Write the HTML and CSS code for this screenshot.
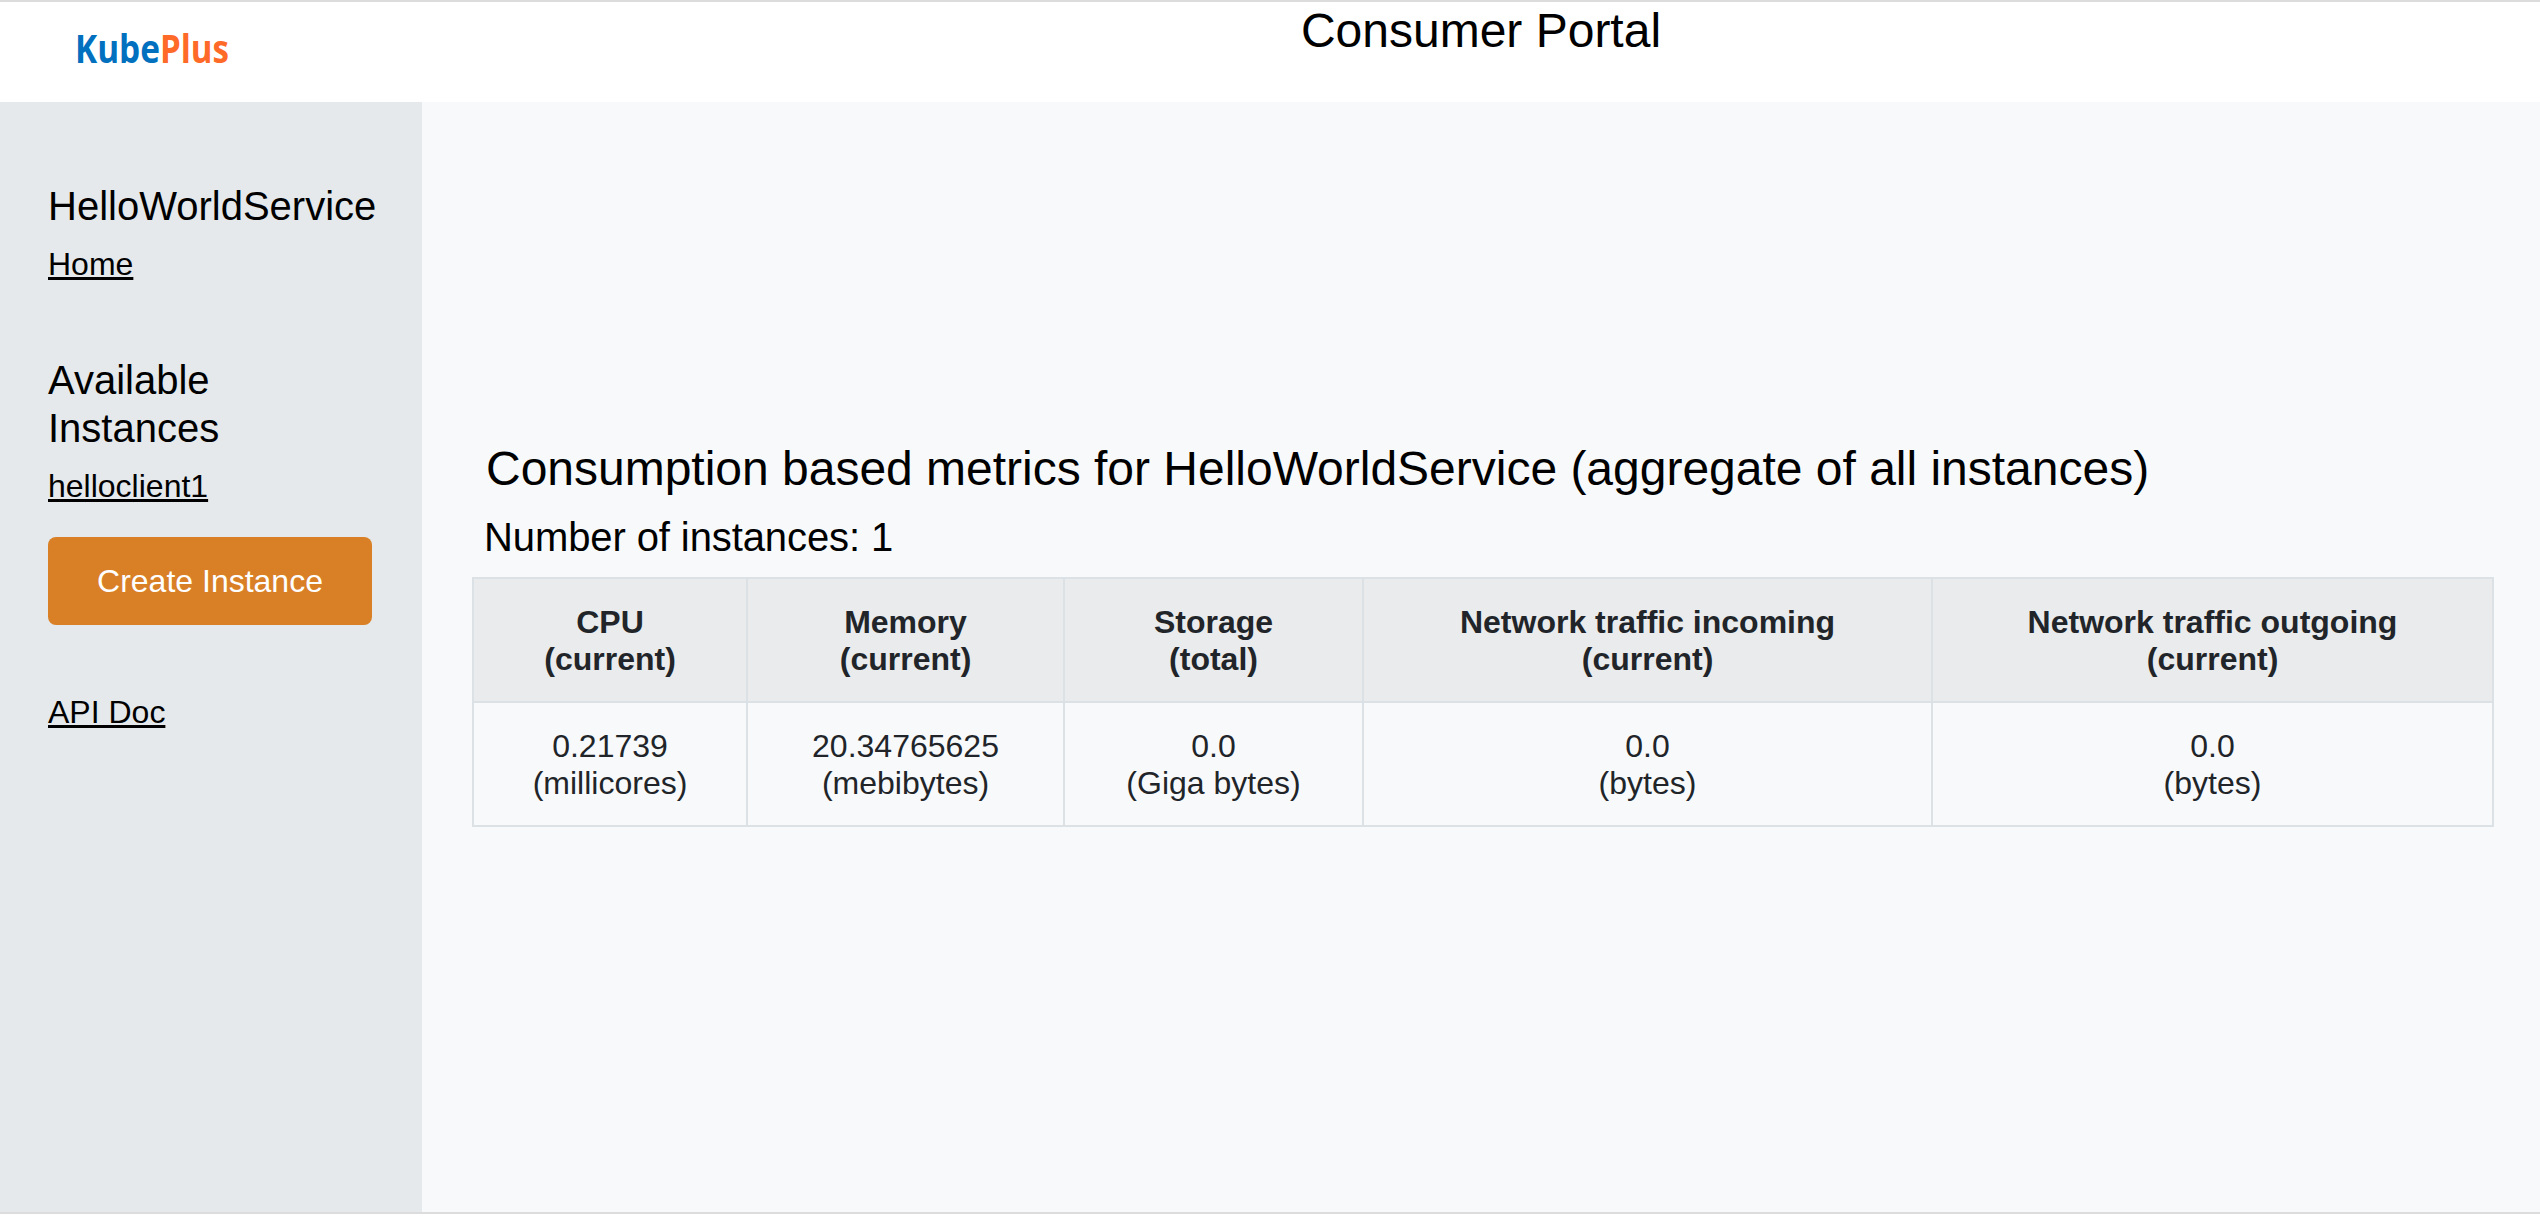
FILE: index.html
```html
<!DOCTYPE html>
<html lang="en">
<head>
  <meta charset="utf-8">
  <title>KubePlus Consumer Portal</title>
  <link rel="stylesheet" href="styles.css">
</head>
<body>
  <header class="topbar">
    <svg class="logo" width="422" height="100" viewBox="0 0 422 100" role="img" aria-label="KubePlus">
      <text class="logo-text logo-kube" x="75" y="60.5" textLength="85" lengthAdjust="spacingAndGlyphs">Kube</text>
      <text class="logo-text logo-plus" x="160" y="60.5" textLength="69" lengthAdjust="spacingAndGlyphs">Plus</text>
    </svg>
    <h1 class="portal-title">Consumer Portal</h1>
  </header>
  <div class="layout">
    <nav class="sidebar">
      <h4 class="side-heading">HelloWorldService</h4>
      <a class="side-link" href="#">Home</a>
      <h4 class="side-heading side-heading-instances">Available<br>Instances</h4>
      <a class="side-link" href="#">helloclient1</a>
      <button class="create-button" type="button">Create Instance</button>
      <a class="side-link side-link-doc" href="#">API Doc</a>
    </nav>
    <main class="content">
      <h2 class="metrics-title">Consumption based metrics for HelloWorldService (aggregate of all instances)</h2>
      <h4 class="metrics-count">Number of instances: 1</h4>
      <table class="metrics">
        <colgroup>
          <col class="col-cpu"><col class="col-memory"><col class="col-storage"><col class="col-incoming"><col class="col-outgoing">
        </colgroup>
        <thead>
          <tr>
            <th>CPU<br>(current)</th>
            <th>Memory<br>(current)</th>
            <th>Storage<br>(total)</th>
            <th>Network traffic incoming<br>(current)</th>
            <th>Network traffic outgoing<br>(current)</th>
          </tr>
        </thead>
        <tbody>
          <tr>
            <td>0.21739<br>(millicores)</td>
            <td>20.34765625<br>(mebibytes)</td>
            <td>0.0<br>(Giga bytes)</td>
            <td>0.0<br>(bytes)</td>
            <td>0.0<br>(bytes)</td>
          </tr>
        </tbody>
      </table>
    </main>
  </div>
</body>
</html>
```
FILE: styles.css
```css
* {
  box-sizing: border-box;
}

body {
  margin: 0;
  height: 1216px;
  display: flex;
  flex-direction: column;
  overflow: hidden;
  border-top: 2px solid #dcdcdc;
  background: #fff;
  color: #000;
  font-family: "Liberation Sans", Arial, Helvetica, sans-serif;
  font-size: 32px;
  line-height: 37px;
}

h1, h2, h4 {
  margin: 0;
  font-weight: 400;
}

.topbar {
  display: flex;
  height: 100px;
  flex: none;
}

.logo {
  flex: none;
}

.logo-text {
  font-family: "Open Sans", sans-serif;
  font-size: 39px;
  font-weight: 700;
}

.logo-kube {
  fill: #0070bf;
}

.logo-plus {
  fill: #ff6a28;
}

.portal-title {
  flex: 1;
  text-align: center;
  font-size: 48px;
  line-height: 57.6px;
}

.layout {
  display: flex;
  flex: none;
  height: 1112px;
  border-bottom: 2px solid #dcdcdc;
}

.sidebar {
  display: flex;
  flex-direction: column;
  align-items: flex-start;
  flex: none;
  width: 422px;
  padding: 80px 0 0 48px;
  background: #e5e9ec;
}

.side-heading {
  font-size: 40px;
  line-height: 48px;
}

.side-heading-instances {
  margin-top: 73px;
}

.side-link {
  margin-top: 16px;
  color: #000;
  text-decoration: underline;
  text-decoration-thickness: 3px;
}

.create-button {
  width: 324px;
  height: 88px;
  margin-top: 32px;
  padding: 0;
  border: 0;
  border-radius: 8px;
  background: #d98026;
  color: #fff;
  font: inherit;
}

.side-link-doc {
  margin-top: 69px;
}

.content {
  flex: 1;
  padding: 338px 0 0 50px;
  background: #f8f9fb;
}

.metrics-title {
  padding-left: 14px;
  font-size: 48px;
  line-height: 57px;
  letter-spacing: -0.01px;
}

.metrics-count {
  margin: 16px 0;
  padding-left: 12px;
  font-size: 40px;
  line-height: 48px;
  letter-spacing: -0.1px;
}

.metrics {
  width: 2022px;
  border-collapse: collapse;
  table-layout: fixed;
  color: #212529;
  text-align: center;
}

.metrics th,
.metrics td {
  padding: 25px 0 23px;
  border: 2px solid #dce1e6;
}

.metrics th {
  background: #eaebec;
  font-weight: 700;
}

.col-cpu {
  width: 274px;
}

.col-memory {
  width: 317px;
}

.col-storage {
  width: 299px;
}

.col-incoming {
  width: 569px;
}

.col-outgoing {
  width: 561px;
}
```
